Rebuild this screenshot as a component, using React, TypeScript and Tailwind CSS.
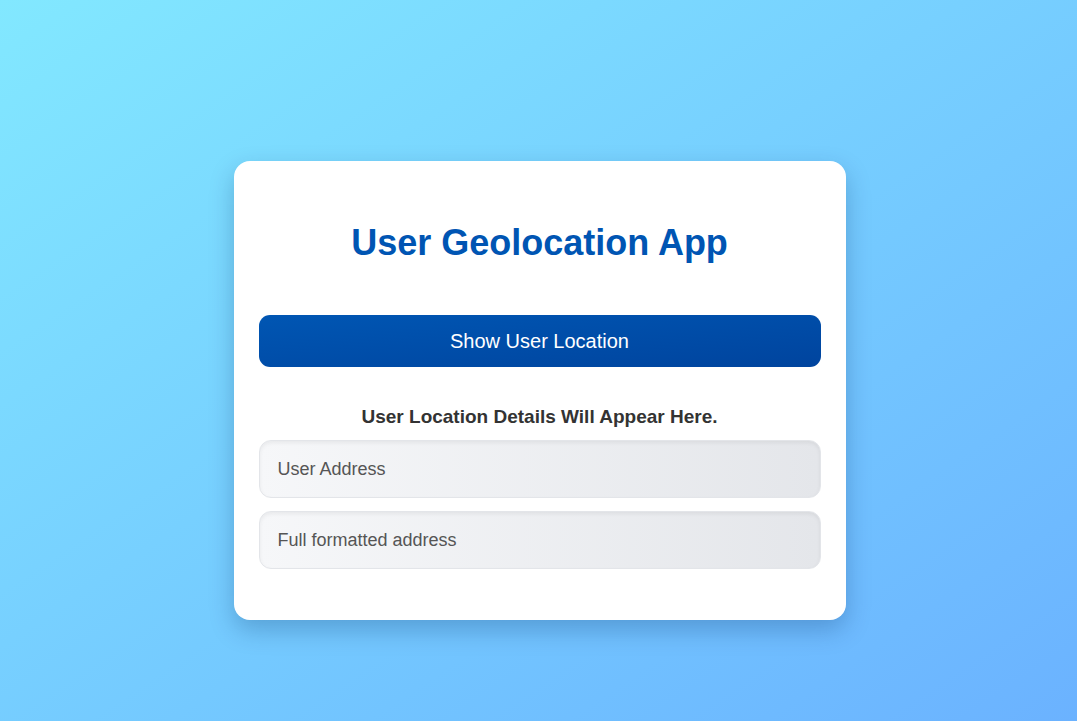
import React from "react";

export default function App() {
  return (
    <div
      className="w-full h-[721px] flex justify-center items-start pt-[161px] bg-gradient-to-br from-[#82e8ff] to-[#6bb2ff]"
      style={{ fontFamily: '"Liberation Sans", Arial, sans-serif' }}
    >
      <div className="w-[612px] ml-[2px] bg-white rounded-[16px] p-[25px] shadow-[0_10px_25px_rgba(0,40,90,0.25)]">
        <h1 className="mt-[36px] mb-[52px] text-center text-[36px] leading-[41px] font-bold text-[#0055b3]">
          User Geolocation App
        </h1>
        <button className="w-full h-[52px] rounded-[11px] bg-gradient-to-br from-[#0056b3] to-[#00449e] text-white text-[20px] leading-[23px]">
          Show User Location
        </button>
        <p className="mt-[39px] mb-[13px] text-center text-[19px] leading-[21px] font-bold text-[#333333]">
          User Location Details Will Appear Here.
        </p>
        <div className="flex flex-col gap-[13px] mb-[26px]">
          <div className="h-[58px] flex items-center px-[18px] rounded-[12px] border border-[#e3e5e9] bg-gradient-to-r from-[#f6f7f9] to-[#e4e6ea] shadow-[inset_0_2px_4px_rgba(0,0,0,0.06)] text-[18px] text-[#555555]">
            User Address
          </div>
          <div className="h-[58px] flex items-center px-[18px] rounded-[12px] border border-[#e3e5e9] bg-gradient-to-r from-[#f6f7f9] to-[#e4e6ea] shadow-[inset_0_2px_4px_rgba(0,0,0,0.06)] text-[18px] text-[#555555]">
            Full formatted address
          </div>
        </div>
      </div>
    </div>
  );
}
